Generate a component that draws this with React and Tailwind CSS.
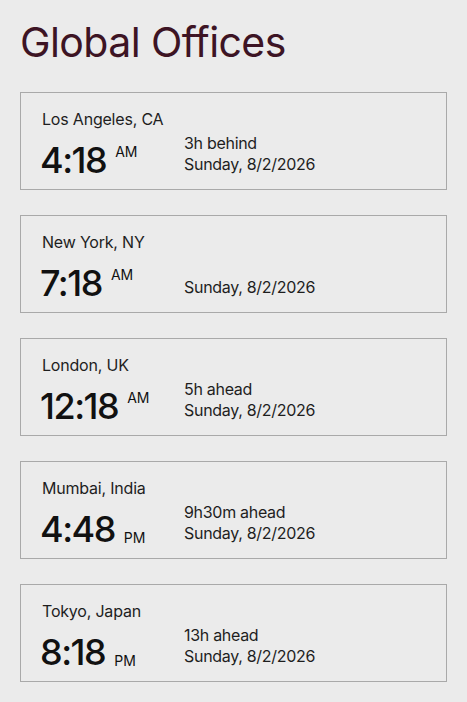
import React from "react";

const offices = [
  { city: "Los Angeles, CA", time: "4:18", ampm: "AM", diff: "3h behind", date: "Sunday, 8/2/2026" },
  { city: "New York, NY", time: "7:18", ampm: "AM", diff: "", date: "Sunday, 8/2/2026" },
  { city: "London, UK", time: "12:18", ampm: "AM", diff: "5h ahead", date: "Sunday, 8/2/2026" },
  { city: "Mumbai, India", time: "4:48", ampm: "PM", diff: "9h30m ahead", date: "Sunday, 8/2/2026" },
  { city: "Tokyo, Japan", time: "8:18", ampm: "PM", diff: "13h ahead", date: "Sunday, 8/2/2026" },
];

export default function App() {
  return (
    <div
      className="min-h-[702px] w-[467px] bg-[#ebebeb] px-5 pt-[18px]"
      style={{ fontFamily: "Inter, 'Liberation Sans', sans-serif" }}
    >
      <h1 className="text-[41px] leading-[48px] text-[#3d1424] tracking-[-0.6px] font-normal">
        Global Offices
      </h1>
      <div className="mt-[26px] flex flex-col gap-[25px] w-[427px]">
        {offices.map((o) => (
          <div key={o.city} className="h-[98px] border border-[#a9a9a9] pl-[21px] pt-[16px]">
            <div className="text-[16px] leading-[20px] text-[#1e1e1e] tracking-[-0.2px]">{o.city}</div>
            <div className="flex items-end mt-[4px]">
              <div className="w-[142px] flex">
                <span className="text-[36px] leading-[38px] font-medium text-[#111] tracking-[-1.5px] -ml-[2px]">{o.time}</span>
                {o.ampm === "AM" ? (
                  <span className="ml-[9px] text-[14px] leading-[16px] text-[#111] mt-[3px]">AM</span>
                ) : (
                  <span className="ml-[9px] text-[14px] leading-[16px] text-[#111] self-end mb-[2px]">PM</span>
                )}
              </div>
              <div className="text-[16px] leading-[21px] text-[#1e1e1e] tracking-[-0.3px] mb-[4px]">
                <div className="h-[21px]">{o.diff}</div>
                <div>{o.date}</div>
              </div>
            </div>
          </div>
        ))}
      </div>
    </div>
  );
}
